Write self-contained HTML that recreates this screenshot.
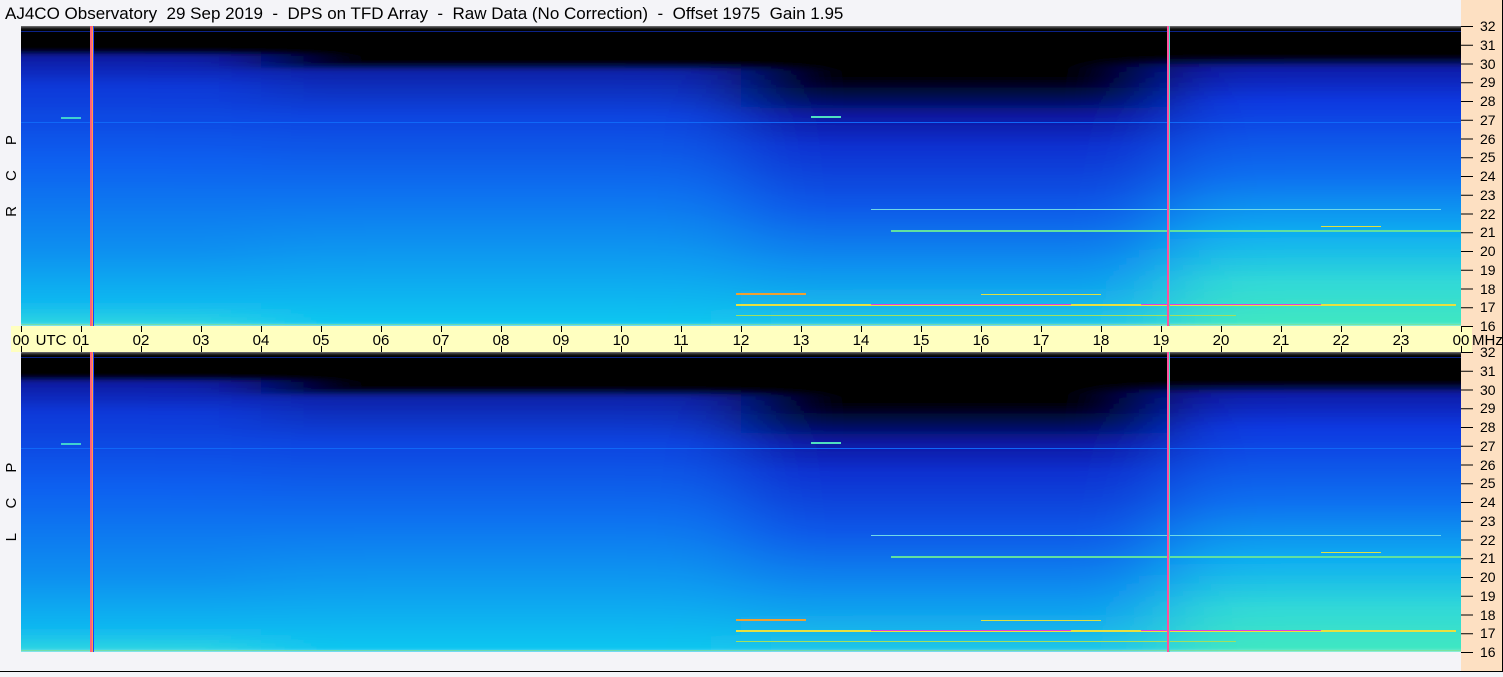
<!DOCTYPE html>
<html><head><meta charset="utf-8"><style>
html,body{margin:0;padding:0;}
body{width:1503px;height:672px;overflow:hidden;background:#f4f4f8;font-family:"Liberation Sans","DejaVu Sans",sans-serif;}
svg text{font-family:"Liberation Sans","DejaVu Sans",sans-serif;white-space:pre;}
</style></head><body>
<svg width="1503" height="672" viewBox="0 0 1503 672" xmlns="http://www.w3.org/2000/svg">
<defs>
<filter id="bl"><feGaussianBlur stdDeviation="45 2"/></filter>
<clipPath id="pc"><rect x="0" y="0" width="1440" height="300"/></clipPath>
<linearGradient id="gA" x1="0" y1="0" x2="0" y2="1">
<stop offset="0" stop-color="#000004"/><stop offset=".08" stop-color="#000004"/><stop offset=".1" stop-color="#0a1aa0"/><stop offset=".2" stop-color="#0838d8"/><stop offset=".45" stop-color="#0860f0"/><stop offset=".75" stop-color="#0890f0"/><stop offset=".92" stop-color="#10b8f0"/><stop offset="1" stop-color="#30d8e0"/></linearGradient>
<linearGradient id="gB" x1="0" y1="0" x2="0" y2="1">
<stop offset="0" stop-color="#000004"/><stop offset=".12" stop-color="#000004"/><stop offset=".15" stop-color="#0a22a8"/><stop offset=".3" stop-color="#0844e0"/><stop offset=".55" stop-color="#0870f0"/><stop offset=".8" stop-color="#08a0f0"/><stop offset="1" stop-color="#10c8f0"/></linearGradient>
<linearGradient id="gC" x1="0" y1="0" x2="0" y2="1">
<stop offset="0" stop-color="#000004"/><stop offset=".17" stop-color="#000004"/><stop offset=".3" stop-color="#0818a0"/><stop offset=".4" stop-color="#0830d0"/><stop offset=".6" stop-color="#0858e8"/><stop offset=".8" stop-color="#0890f0"/><stop offset="1" stop-color="#20c8e8"/></linearGradient>
<linearGradient id="gD" x1="0" y1="0" x2="0" y2="1">
<stop offset="0" stop-color="#000004"/><stop offset=".1" stop-color="#000004"/><stop offset=".14" stop-color="#0a1ca8"/><stop offset=".25" stop-color="#0838e0"/><stop offset=".5" stop-color="#0870f0"/><stop offset=".7" stop-color="#10b0f0"/><stop offset=".85" stop-color="#30d8d8"/><stop offset="1" stop-color="#40e8c0"/></linearGradient>
<g id="panel">
<g clip-path="url(#pc)"><g filter="url(#bl)">
<rect x="-200" y="0" width="450" height="300" fill="url(#gA)"/>
<rect x="240" y="0" width="485" height="300" fill="url(#gB)"/>
<rect x="720" y="0" width="430" height="300" fill="url(#gC)"/>
<rect x="1148" y="0" width="500" height="300" fill="url(#gD)"/>
</g></g>
<rect x="0" y="5" width="1440" height="1" fill="#1030c0" opacity=".7"/>
<rect x="0" y="96" width="1440" height="1" fill="#1068f8"/>
<rect x="790" y="90" width="30" height="2" fill="#50e0c0"/>
<rect x="40" y="91" width="20" height="2" fill="#40d0d0"/>
<rect x="850" y="183" width="570" height="1" fill="#70d8e8"/>
<rect x="870" y="204" width="570" height="2" fill="#60e0a0"/>
<rect x="1300" y="200" width="60" height="1" fill="#e0e040"/>
<rect x="715" y="267" width="70" height="2" fill="#f0a030"/>
<rect x="960" y="268" width="120" height="1" fill="#e0e040"/>
<rect x="715" y="278" width="720" height="2" fill="#e8e040"/>
<rect x="850" y="278" width="200" height="1" fill="#e040e0"/>
<rect x="1120" y="278" width="180" height="1" fill="#e040e0"/>
<rect x="715" y="289" width="500" height="1" fill="#a0e060"/>
<rect x="0" y="298" width="1440" height="1" fill="#80e080" opacity=".6"/>
<rect x="69" y="0" width="2" height="300" fill="#ff6080"/>
<rect x="71" y="0" width="1" height="300" fill="#ffa040"/>
<rect x="72" y="0" width="1" height="300" fill="#2040ff"/>
<rect x="1146" y="0" width="2" height="300" fill="#ff50a0"/>
<rect x="1148" y="0" width="1" height="300" fill="#40e0c0"/>
</g>
</defs>
<rect x="1461" y="0" width="42" height="672" fill="#fde0c2"/>
<text x="5" y="19" font-size="17" fill="#000">AJ4CO Observatory  29 Sep 2019  -  DPS on TFD Array  -  Raw Data (No Correction)  -  Offset 1975  Gain 1.95</text>
<use href="#panel" x="21" y="26"/>
<use href="#panel" x="21" y="352"/>
<rect x="11" y="326" width="1461" height="26" fill="#ffffc0"/>
<g font-size="15" fill="#000">
<text transform="translate(16,176) rotate(-90)" text-anchor="middle">R      C      P</text>
<text transform="translate(16,502) rotate(-90)" text-anchor="middle">L      C      P</text>
</g>
<g stroke="#000" stroke-width="1">
<path d="M1461 26.5h12M1461 45.25h12M1461 64h12M1461 82.75h12M1461 101.5h12M1461 120.25h12M1461 139h12M1461 157.75h12M1461 176.5h12M1461 195.25h12M1461 214h12M1461 232.75h12M1461 251.5h12M1461 270.25h12M1461 289h12M1461 307.75h12M1461 326.5h12"/>
<path d="M1461 352.5h12M1461 371.25h12M1461 390h12M1461 408.75h12M1461 427.5h12M1461 446.25h12M1461 465h12M1461 483.75h12M1461 502.5h12M1461 521.25h12M1461 540h12M1461 558.75h12M1461 577.5h12M1461 596.25h12M1461 615h12M1461 633.75h12M1461 652.5h12"/>
</g>
<g font-size="14" fill="#000">
<text x="1480" y="31">32</text><text x="1480" y="50">31</text><text x="1480" y="69">30</text><text x="1480" y="87">29</text><text x="1480" y="106">28</text><text x="1480" y="125">27</text><text x="1480" y="144">26</text><text x="1480" y="162">25</text><text x="1480" y="181">24</text><text x="1480" y="200">23</text><text x="1480" y="219">22</text><text x="1480" y="237">21</text><text x="1480" y="256">20</text><text x="1480" y="275">19</text><text x="1480" y="294">18</text><text x="1480" y="312">17</text><text x="1480" y="331">16</text>
<text x="1480" y="357">32</text><text x="1480" y="376">31</text><text x="1480" y="395">30</text><text x="1480" y="413">29</text><text x="1480" y="432">28</text><text x="1480" y="451">27</text><text x="1480" y="470">26</text><text x="1480" y="488">25</text><text x="1480" y="507">24</text><text x="1480" y="526">23</text><text x="1480" y="545">22</text><text x="1480" y="563">21</text><text x="1480" y="582">20</text><text x="1480" y="601">19</text><text x="1480" y="620">18</text><text x="1480" y="638">17</text><text x="1480" y="657">16</text>
</g>
<g stroke="#000" stroke-width="1">
<path d="M21.5 326v6M81.5 326v6M141.5 326v6M201.5 326v6M261.5 326v6M321.5 326v6M381.5 326v6M441.5 326v6M501.5 326v6M561.5 326v6M621.5 326v6M681.5 326v6M741.5 326v6M801.5 326v6M861.5 326v6M921.5 326v6M981.5 326v6M1041.5 326v6M1101.5 326v6M1161.5 326v6M1221.5 326v6M1281.5 326v6M1341.5 326v6M1401.5 326v6M1461.5 326v6"/>
<path d="M21.5 346v6M81.5 346v6M141.5 346v6M201.5 346v6M261.5 346v6M321.5 346v6M381.5 346v6M441.5 346v6M501.5 346v6M561.5 346v6M621.5 346v6M681.5 346v6M741.5 346v6M801.5 346v6M861.5 346v6M921.5 346v6M981.5 346v6M1041.5 346v6M1101.5 346v6M1161.5 346v6M1221.5 346v6M1281.5 346v6M1341.5 346v6M1401.5 346v6M1461.5 346v6"/>
</g>
<g font-size="15" fill="#000" text-anchor="middle">
<text x="21" y="345">00</text><text x="51" y="345">UTC</text><text x="81" y="345">01</text><text x="141" y="345">02</text><text x="201" y="345">03</text><text x="261" y="345">04</text><text x="321" y="345">05</text><text x="381" y="345">06</text><text x="441" y="345">07</text><text x="501" y="345">08</text><text x="561" y="345">09</text><text x="621" y="345">10</text><text x="681" y="345">11</text><text x="741" y="345">12</text><text x="801" y="345">13</text><text x="861" y="345">14</text><text x="921" y="345">15</text><text x="981" y="345">16</text><text x="1041" y="345">17</text><text x="1101" y="345">18</text><text x="1161" y="345">19</text><text x="1221" y="345">20</text><text x="1281" y="345">21</text><text x="1341" y="345">22</text><text x="1401" y="345">23</text><text x="1461" y="345">00</text>
</g>
<text x="1472" y="345" font-size="15" fill="#000">MHz</text>
<rect x="0" y="671" width="1503" height="1" fill="#000"/>
<rect x="1502" y="0" width="1" height="672" fill="#000"/>
</svg>
</body></html>
